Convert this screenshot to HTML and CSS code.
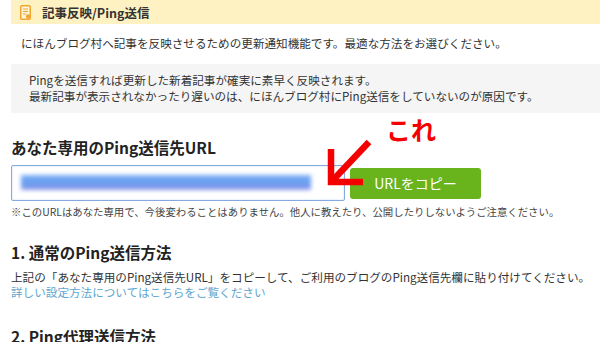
FILE: index.html
```html
<!DOCTYPE html>
<html lang="ja">
<head>
    <meta charset="UTF-8">
    <meta name="viewport" content="width=device-width, initial-scale=1.0">
    <title>記事反映/Ping送信</title>
    <link rel="stylesheet" href="styles.css">
</head>
<body>

<div class="page">
    <div class="section-header">
        <svg class="header-icon" width="11" height="15" viewBox="0 0 11 15">
            <rect x="0.75" y="0.75" width="9.5" height="13.5" rx="1" fill="#fff6d8" stroke="#f2a531" stroke-width="1.5"/>
            <path d="M3 4h5M3 6.5h5M3 9h3" stroke="#f2a531" stroke-width="1.2"/>
            <circle cx="8" cy="11.5" r="2.2" fill="#f2a531"/>
        </svg>
        <h2>記事反映/Ping送信</h2>
    </div>

    <p class="intro">にほんブログ村へ記事を反映させるための更新通知機能です。最適な方法をお選びください。</p>

    <div class="notice">
        <p>Pingを送信すれば更新した新着記事が確実に素早く反映されます。</p>
        <p>最新記事が表示されなかったり遅いのは、にほんブログ村にPing送信をしていないのが原因です。</p>
    </div>

    <h3 class="ping-title">あなた専用のPing送信先URL</h3>

    <div class="url-row">
        <div class="url-box">
            <div class="url-blur"></div>
        </div>
        <button class="copy-btn">URLをコピー</button>
    </div>
    <p class="url-note">※このURLはあなた専用で、今後変わることはありません。他人に教えたり、公開したりしないようご注意ください。</p>

    <h3 class="method-title first">1. 通常のPing送信方法</h3>
    <p class="method-text">上記の「あなた専用のPing送信先URL」をコピーして、ご利用のブログのPing送信先欄に貼り付けてください。</p>
    <a class="method-link" href="#">詳しい設定方法についてはこちらをご覧ください</a>

    <h3 class="method-title second">2. Ping代理送信方法</h3>

    <!-- 注釈（赤い矢印と「これ」） -->
    <span class="note-label">これ</span>
    <svg class="note-arrow" width="600" height="342" viewBox="0 0 600 342">
        <path d="M369 142L334 179" stroke="#f50000" stroke-width="6.5" fill="none"/>
        <path d="M331 149V182H363" stroke="#f50000" stroke-width="6.5" fill="none" stroke-linejoin="miter"/>
    </svg>
</div>

</body>
</html>
```

FILE: styles.css
```css
body {
    font-family: "Noto Sans CJK JP", "Noto Sans", sans-serif;
    margin: 0;
    padding: 0;
    color: #333;
    background: #fff;
    overflow: hidden;
}
.page {
    position: relative;
    width: 600px;
    height: 342px;
    padding-left: 11px;
    box-sizing: border-box;
}
.section-header {
    display: flex;
    align-items: center;
    gap: 11px;
    height: 24px;
    padding-left: 9px;
    background: #fff2c2;
}
.section-header h2 {
    margin: 0;
    font-size: 12.5px;
    font-weight: bold;
    color: #333;
}
.intro {
    margin: 10px 0 12px;
    padding-left: 10px;
    font-size: 11.6px;
    line-height: 18px;
    white-space: nowrap;
}
.notice {
    background: #f5f5f5;
    padding: 8px 0 9px 18px;
}
.notice p {
    margin: 0;
    font-size: 11.6px;
    line-height: 16px;
    white-space: nowrap;
}
.ping-title,
.method-title {
    margin: 0;
    font-size: 15.5px;
    line-height: 20px;
    font-weight: bold;
    color: #222;
}
.ping-title {
    margin-top: 24px;
}
.url-row {
    display: flex;
    align-items: center;
    gap: 5px;
    margin-top: 8px;
}
.url-box {
    width: 334px;
    height: 36px;
    box-sizing: border-box;
    border: 1px solid #86aadf;
    border-radius: 2px;
    box-shadow: inset 0 0 2px rgba(120, 160, 220, 0.4);
    padding: 9px 0 0 9px;
}
.url-blur {
    width: 290px;
    height: 15px;
    background: linear-gradient(#6aa6f4, #5a92ee 60%, #8a8fe6);
    filter: blur(2px);
    opacity: 0.9;
}
.copy-btn {
    width: 131px;
    height: 31px;
    border: none;
    border-radius: 3px;
    background: #69b31d;
    color: #fff;
    font-family: inherit;
    font-size: 14px;
    cursor: pointer;
}
.url-note {
    margin: 4px 0 0;
    font-size: 10.4px;
    line-height: 14px;
    color: #444;
    white-space: nowrap;
}
.method-title.first {
    margin-top: 23px;
}
.method-title.second {
    margin-top: 26px;
}
.method-text {
    margin: 8px 0 0;
    font-size: 11.6px;
    line-height: 15px;
    white-space: nowrap;
}
.method-link {
    display: block;
    font-size: 11.6px;
    line-height: 15px;
    color: #5ea6cf;
    text-decoration: none;
}
.note-label {
    position: absolute;
    left: 386px;
    top: 114px;
    font-size: 25px;
    line-height: 30px;
    font-weight: bold;
    color: #f50000;
}
.note-arrow {
    position: absolute;
    left: 0;
    top: 0;
    pointer-events: none;
}
```
